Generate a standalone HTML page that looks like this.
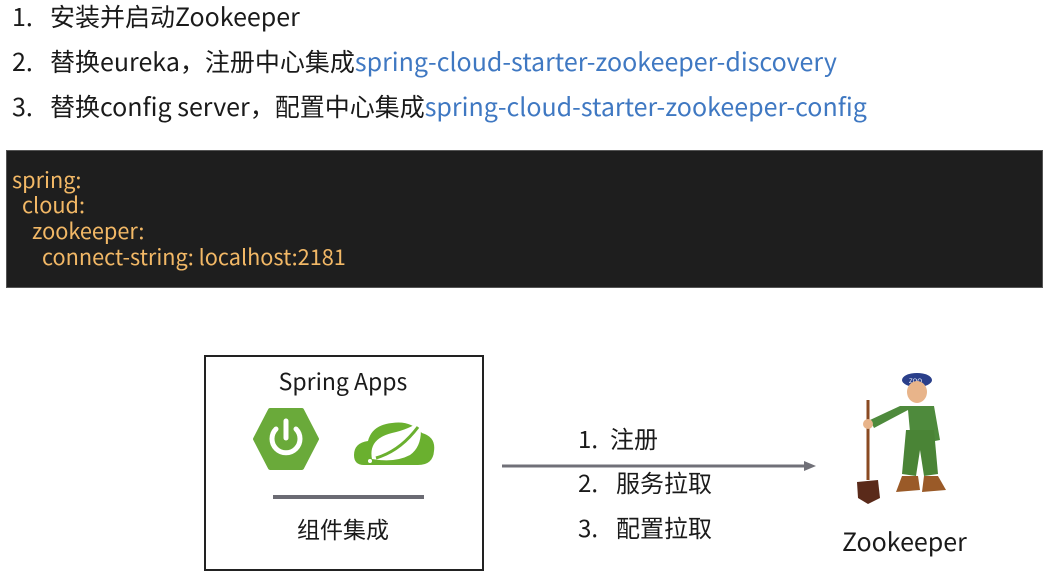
<!DOCTYPE html>
<html><head><meta charset="utf-8"><style>
body{margin:0;width:1055px;height:579px;background:#fff;position:relative;overflow:hidden;font-family:"Noto Sans CJK SC","Liberation Sans",sans-serif;color:#1a1a1a}
.a{position:absolute;white-space:nowrap;line-height:1}
.t{font-size:25px}
.b{color:#3f78c2}
.n{display:inline-block;width:38px}
.code{position:absolute;left:6px;top:150px;width:1037px;height:138px;background:#1e1e1e;border:1px solid #555;box-sizing:border-box}
.c{position:absolute;color:#f2b866;font-size:21.7px;line-height:1;white-space:nowrap}
.m{display:inline-block;width:38px}
</style></head><body>
<div class="a t" style="left:12px;top:4px"><span class="n">1.</span>安装并启动Zookeeper</div>
<div class="a t" style="left:12px;top:49px"><span class="n">2.</span>替换eureka，注册中心集成<span class="b">spring-cloud-starter-zookeeper-discovery</span></div>
<div class="a t" style="left:12px;top:94px"><span class="n">3.</span>替换config server，配置中心集成<span class="b">spring-cloud-starter-zookeeper-config</span></div>
<div class="code">
<div class="c" style="left:5px;top:18px">spring:</div>
<div class="c" style="left:15px;top:43px">cloud:</div>
<div class="c" style="left:25px;top:69px">zookeeper:</div>
<div class="c" style="left:35px;top:95px">connect-string: localhost:2181</div>
</div>
<div style="position:absolute;left:204px;top:355px;width:280px;height:216px;border:2px solid #222;box-sizing:border-box"></div>
<div class="a" style="left:204px;width:278px;text-align:center;top:369px;font-size:23px">Spring Apps</div>
<svg style="position:absolute;left:250px;top:405px" width="190" height="70">
<polygon points="20,5 52,5 67,34 52,63 20,63 5,34" fill="#6aaa3a" stroke="#6aaa3a" stroke-width="4" stroke-linejoin="round"/>
<path d="M26,24 A14,14 0 1 0 46,24" fill="none" stroke="#fff" stroke-width="5" stroke-linecap="round"/>
<line x1="36" y1="16" x2="36" y2="33" stroke="#fff" stroke-width="5" stroke-linecap="round"/>
<path d="M114,60 Q104,60 104,50 Q104,38 118,36 Q122,20 142,18 Q160,15 172,28 Q186,32 184,46 Q183,60 168,60 Z" fill="#6ab02f"/>
<path d="M122,54 Q118,34 142,28 Q160,24 170,16 Q174,40 160,50 Q145,58 122,54 Z" fill="#fff"/>
<path d="M126,53 Q150,46 168,22" fill="none" stroke="#6ab02f" stroke-width="3"/>
<circle cx="120" cy="56" r="2" fill="#fff"/>
</svg>
<div style="position:absolute;left:273px;top:495px;width:151px;height:4px;background:#6b6b73"></div>
<div class="a" style="left:204px;width:278px;text-align:center;top:517px;font-size:23px">组件集成</div>
<svg style="position:absolute;left:500px;top:458px" width="320" height="16">
<line x1="2" y1="8" x2="306" y2="8" stroke="#707078" stroke-width="3"/>
<polygon points="304,3 316,8 304,13" fill="#707078"/>
</svg>
<div class="a" style="left:578px;top:426px;font-size:24px"><span class="m" style="width:32px">1.</span>注册</div>
<div class="a" style="left:578px;top:470px;font-size:24px"><span class="m">2.</span>服务拉取</div>
<div class="a" style="left:578px;top:515px;font-size:24px"><span class="m">3.</span>配置拉取</div>
<div class="a" style="left:842px;top:529px;font-size:25px">Zookeeper</div>
<svg style="position:absolute;left:850px;top:370px" width="110" height="135">
<line x1="18" y1="30" x2="18" y2="110" stroke="#8a4a22" stroke-width="3"/>
<path d="M7,112 L28,110 L30,128 L18,134 L8,128 Z" fill="#5a2a1a"/>
<ellipse cx="67" cy="10" rx="15" ry="7" fill="#2a3f8a"/>
<text x="59" y="13" font-size="6" fill="#fff" font-family="Liberation Sans,sans-serif">ZOO</text>
<ellipse cx="67" cy="22" rx="10" ry="11" fill="#e8b48a"/>
<path d="M50,36 L84,36 L90,70 L80,72 L80,62 L60,62 L58,40 L24,58 L20,50 Z" fill="#4e8a3c"/>
<path d="M56,60 L84,60 L88,104 L74,106 L70,80 L66,106 L52,104 Z" fill="#4a8436"/>
<circle cx="18" cy="54" r="5" fill="#e8b48a"/>
<path d="M52,106 L68,106 L70,120 L46,122 Z" fill="#9a5a28"/>
<path d="M74,106 L88,106 L96,120 L72,122 Z" fill="#9a5a28"/>
</svg>
</body></html>
